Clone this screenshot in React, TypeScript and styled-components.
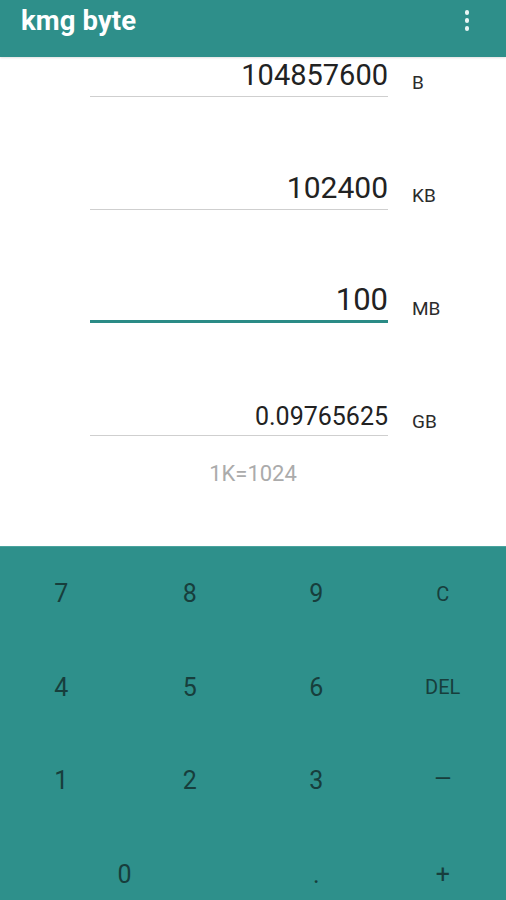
import styled, { createGlobalStyle } from "styled-components";

const GlobalStyle = createGlobalStyle`
  html, body {
    margin: 0;
    padding: 0;
    height: 900px;
    overflow: hidden;
    background: #ffffff;
    font-family: Roboto, "Noto Sans", sans-serif;
  }
`;

const units = [
  { value: "104857600", unit: "B", size: 29, active: false },
  { value: "102400", unit: "KB", size: 30, active: false },
  { value: "100", unit: "MB", size: 31, active: true },
  { value: "0.09765625", unit: "GB", size: 25, active: false },
];

const keys = [
  { label: "7" },
  { label: "8" },
  { label: "9" },
  { label: "C", small: true },
  { label: "4" },
  { label: "5" },
  { label: "6" },
  { label: "DEL", small: true },
  { label: "1" },
  { label: "2" },
  { label: "3" },
  { label: "\u2014", dash: true },
  { label: "0", wide: true },
  { label: "." },
  { label: "+" },
];

const App = () => {
  return (
    <Screen>
      <GlobalStyle />
      <AppBar>
        <Title>kmg byte</Title>
        <MenuButton aria-label="more">
          <Dot />
          <Dot />
          <Dot />
        </MenuButton>
      </AppBar>
      <Converter>
        {units.map((u) => (
          <FieldRow key={u.unit}>
            <Field $active={u.active} $size={u.size}>
              {u.value}
            </Field>
            <Unit>{u.unit}</Unit>
          </FieldRow>
        ))}
        <Note>1K=1024</Note>
      </Converter>
      <Keypad>
        {keys.map((k) => (
          <Key key={k.label} $wide={k.wide} $small={k.small} $dash={k.dash}>
            {k.label}
          </Key>
        ))}
      </Keypad>
    </Screen>
  );
};

const Screen = styled.div`
  width: 506px;
  display: flex;
  flex-direction: column;
`;

const AppBar = styled.header`
  height: 57px;
  background-color: #2e8f8a;
  display: flex;
  align-items: center;
  justify-content: space-between;
  padding: 0 0 0 21px;
  box-shadow: 0 1px 2px rgba(0, 0, 0, 0.12);
  position: relative;
  z-index: 1;
`;

const Title = styled.h1`
  margin: 0 0 16px;
  color: #ffffff;
  font-size: 27.5px;
  font-weight: 700;
  letter-spacing: 0.1px;
`;

const MenuButton = styled.div`
  width: 78px;
  height: 57px;
  display: flex;
  flex-direction: column;
  align-items: center;
  justify-content: flex-start;
  gap: 3.5px;
  padding-top: 10px;
  box-sizing: border-box;
`;

const Dot = styled.span`
  width: 4.5px;
  height: 4.5px;
  border-radius: 50%;
  background: #e8f6f5;
`;

const Converter = styled.main`
  height: 489px;
  box-sizing: border-box;
  display: flex;
  flex-direction: column;
  align-items: stretch;
  gap: 73px;
  background: #ffffff;
`;

const FieldRow = styled.div`
  height: 40px;
  display: flex;
  align-items: flex-end;
  padding-left: 90px;
`;

const Field = styled.div<{ $active: boolean; $size: number }>`
  width: 298px;
  box-sizing: border-box;
  text-align: right;
  font-size: ${(p) => p.$size}px;
  line-height: 1;
  color: #222222;
  padding-bottom: ${(p) => (p.$active ? "5px" : "6px")};
  border-bottom: ${(p) => (p.$active ? "3px solid #2a8b86" : "1px solid #cfcfcf")};
`;

const Unit = styled.div`
  margin-left: 24px;
  font-size: 19px;
  color: #2c2c2c;
  padding-bottom: 3px;
`;

const Note = styled.div`
  margin-top: -48px;
  text-align: center;
  font-size: 22px;
  color: #ababab;
`;

const Keypad = styled.section`
  background-color: #2e908b;
  border-top: 1px solid #4aa39e;
  display: grid;
  grid-template-columns: repeat(4, 1fr);
  grid-auto-rows: 93.5px;
`;

const Key = styled.div<{ $wide?: boolean; $small?: boolean; $dash?: boolean }>`
  grid-column: ${(p) => (p.$wide ? "span 2" : "auto")};
  display: flex;
  align-items: center;
  justify-content: center;
  font-size: ${(p) => (p.$small ? "20px" : p.$dash ? "22px" : "25px")};
  color: #173e3c;
  padding-bottom: ${(p) => (p.$dash ? "4px" : "0")};
  &:nth-child(4n + 1) {
    padding-right: 4px;
  }
`;

export default App;
